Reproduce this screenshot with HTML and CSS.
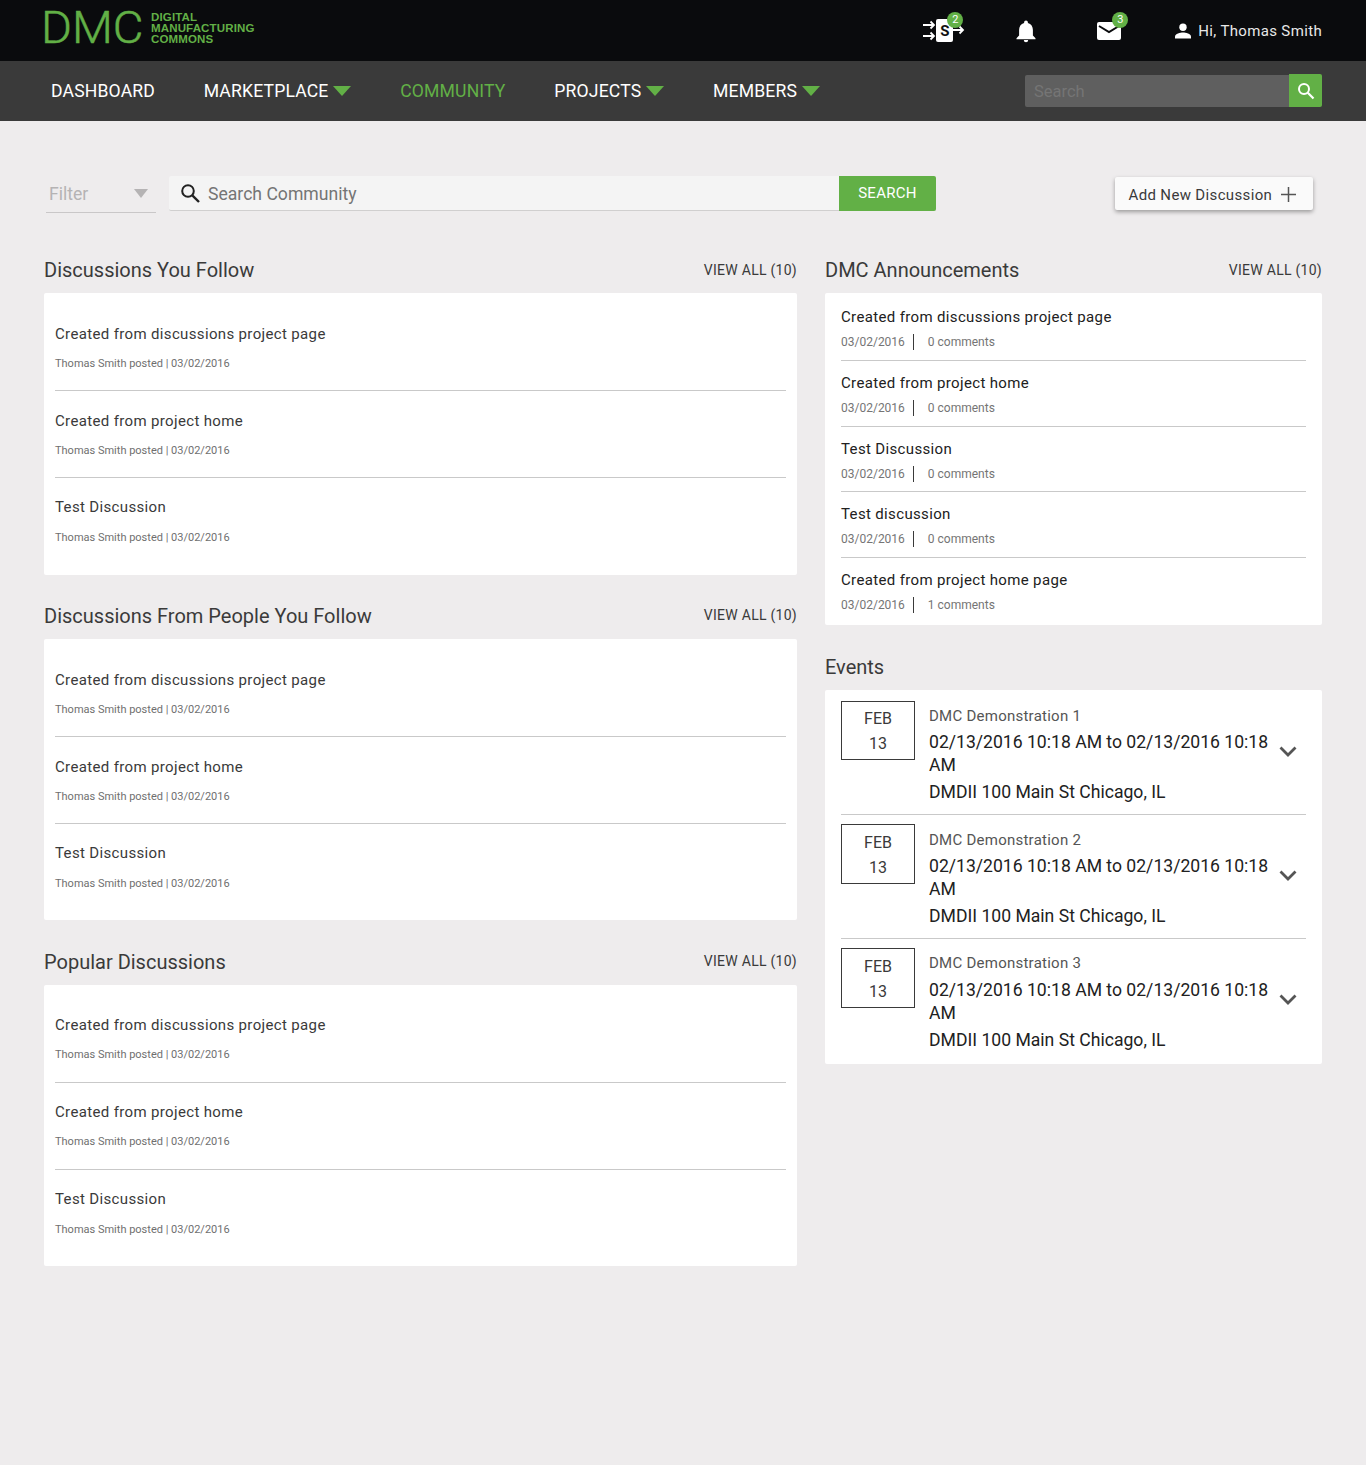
FILE: index.html
```html
<!DOCTYPE html>
<html lang="en">
<head>
<meta charset="utf-8">
<title>DMC Community</title>
<link rel="stylesheet" href="styles.css">
</head>
<body>
<header class="topbar">
  <a class="logo">
    <span class="logo-dmc">DMC</span>
    <span class="logo-sub">DIGITAL<br>MANUFACTURING<br>COMMONS</span>
  </a>
  <div class="top-actions">
    <span class="top-icon icon-swap">
      <svg width="42" height="30" viewBox="0 0 42 30"><path d="M0 11h10.500M7.500 7.500 11 11l-3.500 3.500M0 22h10.500M7.500 18.500 11 22l-3.500 3.500" fill="none" stroke="#fff" stroke-width="1.800"/><rect x="13" y="5" width="17" height="23" rx="2" fill="#fff"/><path d="M30 16h9.500M36.500 12.500 40 16l-3.500 3.500" fill="none" stroke="#fff" stroke-width="1.800"/></svg>
      <b class="s-letter">S</b>
      <span class="badge">2</span>
    </span>
    <span class="top-icon icon-bell">
      <svg width="22" height="24" viewBox="0 0 22 24"><path d="M11 1.500c1.100 0 1.900.8 1.900 1.900v.6c3.300.9 5 3.700 5 7v5.500l2.600 2.700v1H1.500v-1l2.600-2.700V11c0-3.300 1.700-6.100 5-7v-.6c0-1.100.8-1.900 1.900-1.900zM8.800 21h4.400a2.200 2.200 0 0 1-4.400 0z" fill="#fff"/></svg>
    </span>
    <span class="top-icon icon-mail">
      <svg width="26" height="20" viewBox="0 0 26 20"><path d="M3 1h20a2 2 0 0 1 2 2v14a2 2 0 0 1-2 2H3a2 2 0 0 1-2-2V3a2 2 0 0 1 2-2z" fill="#fff"/><path d="M3 5l10 6 10-6" fill="none" stroke="#0a0b0d" stroke-width="2"/></svg>
      <span class="badge">3</span>
    </span>
    <span class="user">
      <svg width="16" height="16" viewBox="0 0 16 16"><circle cx="8" cy="4.300" r="3.700" fill="#fff"/><path d="M0 15.500v-2c0-2.700 5.300-4 8-4s8 1.300 8 4v2z" fill="#fff"/></svg>
      <span>Hi, Thomas Smith</span>
    </span>
  </div>
</header>
<nav class="mainnav">
  <ul class="nav-list">
    <li class="nav-item">DASHBOARD</li>
    <li class="nav-item has-caret">MARKETPLACE<i class="caret"></i></li>
    <li class="nav-item active">COMMUNITY</li>
    <li class="nav-item has-caret">PROJECTS<i class="caret"></i></li>
    <li class="nav-item has-caret">MEMBERS<i class="caret"></i></li>
  </ul>
  <div class="nav-search">
    <span class="nav-search-input">Search</span>
    <span class="nav-search-btn">
      <svg width="18" height="18" viewBox="0 0 18 18"><circle cx="7" cy="7" r="5" fill="none" stroke="#fff" stroke-width="2"/><path d="M10.800 10.800 16.500 16.500" stroke="#fff" stroke-width="2.200"/></svg>
    </span>
  </div>
</nav>
<main class="page">
  <div class="toolbar">
    <div class="filter"><span>Filter</span><i class="filter-caret"></i></div>
    <div class="search">
      <svg class="search-icon" width="20" height="20" viewBox="0 0 20 20"><circle cx="8" cy="8" r="5.800" fill="none" stroke="#212121" stroke-width="2"/><path d="M12.300 12.300 19 19" stroke="#212121" stroke-width="2.400"/></svg>
      <span class="search-text">Search Community</span>
      <span class="search-btn">SEARCH</span>
    </div>
    <button class="add-btn">Add New Discussion
      <svg width="15" height="15" viewBox="0 0 15 15"><path d="M7.500 0v15M0 7.500h15" stroke="#555" stroke-width="1.500"/></svg>
    </button>
  </div>
  <div class="columns">
    <div class="col-left">
      <section class="block">
        <div class="block-head"><h2>Discussions You Follow</h2><a>VIEW ALL (10)</a></div>
        <div class="card disc-card">
          <article class="disc"><h3>Created from discussions project page</h3><p>Thomas Smith posted | 03/02/2016</p></article>
          <article class="disc"><h3>Created from project home</h3><p>Thomas Smith posted | 03/02/2016</p></article>
          <article class="disc"><h3>Test Discussion</h3><p>Thomas Smith posted | 03/02/2016</p></article>
        </div>
      </section>
      <section class="block">
        <div class="block-head"><h2>Discussions From People You Follow</h2><a>VIEW ALL (10)</a></div>
        <div class="card disc-card">
          <article class="disc"><h3>Created from discussions project page</h3><p>Thomas Smith posted | 03/02/2016</p></article>
          <article class="disc"><h3>Created from project home</h3><p>Thomas Smith posted | 03/02/2016</p></article>
          <article class="disc"><h3>Test Discussion</h3><p>Thomas Smith posted | 03/02/2016</p></article>
        </div>
      </section>
      <section class="block">
        <div class="block-head"><h2>Popular Discussions</h2><a>VIEW ALL (10)</a></div>
        <div class="card disc-card">
          <article class="disc"><h3>Created from discussions project page</h3><p>Thomas Smith posted | 03/02/2016</p></article>
          <article class="disc"><h3>Created from project home</h3><p>Thomas Smith posted | 03/02/2016</p></article>
          <article class="disc"><h3>Test Discussion</h3><p>Thomas Smith posted | 03/02/2016</p></article>
        </div>
      </section>
    </div>
    <div class="col-right">
      <section class="block">
        <div class="block-head"><h2>DMC Announcements</h2><a>VIEW ALL (10)</a></div>
        <div class="card ann-card">
          <article class="ann"><h3>Created from discussions project page</h3><p><span>03/02/2016</span><span>0 comments</span></p></article>
          <article class="ann"><h3>Created from project home</h3><p><span>03/02/2016</span><span>0 comments</span></p></article>
          <article class="ann"><h3>Test Discussion</h3><p><span>03/02/2016</span><span>0 comments</span></p></article>
          <article class="ann"><h3>Test discussion</h3><p><span>03/02/2016</span><span>0 comments</span></p></article>
          <article class="ann"><h3>Created from project home page</h3><p><span>03/02/2016</span><span>1 comments</span></p></article>
        </div>
      </section>
      <section class="block">
        <div class="block-head"><h2>Events</h2></div>
        <div class="card ev-card">
          <article class="ev">
            <div class="ev-date"><span>FEB</span><span>13</span></div>
            <div class="ev-body"><h4>DMC Demonstration 1</h4><p>02/13/2016 10:18 AM to 02/13/2016 10:18 AM</p><p class="ev-loc">DMDII 100 Main St Chicago, IL</p></div>
            <svg class="chev" width="18" height="11" viewBox="0 0 18 11"><path d="M1.500 1.500 9 9l7.500-7.500" fill="none" stroke="#555" stroke-width="2.800"/></svg>
          </article>
          <article class="ev">
            <div class="ev-date"><span>FEB</span><span>13</span></div>
            <div class="ev-body"><h4>DMC Demonstration 2</h4><p>02/13/2016 10:18 AM to 02/13/2016 10:18 AM</p><p class="ev-loc">DMDII 100 Main St Chicago, IL</p></div>
            <svg class="chev" width="18" height="11" viewBox="0 0 18 11"><path d="M1.500 1.500 9 9l7.500-7.500" fill="none" stroke="#555" stroke-width="2.800"/></svg>
          </article>
          <article class="ev">
            <div class="ev-date"><span>FEB</span><span>13</span></div>
            <div class="ev-body"><h4>DMC Demonstration 3</h4><p>02/13/2016 10:18 AM to 02/13/2016 10:18 AM</p><p class="ev-loc">DMDII 100 Main St Chicago, IL</p></div>
            <svg class="chev" width="18" height="11" viewBox="0 0 18 11"><path d="M1.500 1.500 9 9l7.500-7.500" fill="none" stroke="#555" stroke-width="2.800"/></svg>
          </article>
        </div>
      </section>
    </div>
  </div>
</main>
</body>
</html>
```
FILE: styles.css
```css
* { box-sizing: border-box; }
html, body { margin: 0; padding: 0; }
body {
  min-height: 1465px;
  background: #eeeced;
  color: #3a3a3a;
  font-family: Roboto, "Liberation Sans", sans-serif;
}
h2, h3, h4, p, ul { margin: 0; padding: 0; font-weight: 400; }
ul { list-style: none; }

.topbar {
  height: 61px;
  background: #0a0b0d;
  padding: 0 44px;
  display: flex;
  align-items: center;
  justify-content: space-between;
}
.logo { display: flex; align-items: center; color: #62b046; margin-top: -5px; }
.logo-dmc {
  font-family: Roboto, sans-serif;
  font-weight: 300;
  font-size: 45px;
  line-height: 36px;
  width: 107px;
  margin-left: -3px;
  margin-right: 3px;
  -webkit-text-stroke: .5px #62b046;
  transform: scaleX(1.05);
  transform-origin: left center;
}
.logo-sub {
  font-family: "Liberation Sans", sans-serif;
  font-weight: 700;
  font-size: 11.500px;
  line-height: 11px;
  letter-spacing: .15px;
  margin-top: 1px;
}
.top-actions { display: flex; align-items: center; color: #fff; }
.top-icon { position: relative; display: flex; }
.icon-swap { width: 42px; height: 30px; margin-right: 50px; margin-top: -3px; }
.s-letter {
  position: absolute;
  left: 13px;
  top: 8px;
  width: 17px;
  text-align: center;
  color: #111;
  font-size: 15px;
  line-height: 18px;
}
.icon-bell { width: 22px; margin-right: 59px; }
.icon-mail { width: 26px; margin-right: 53px; margin-top: 1px; }
.badge {
  position: absolute;
  width: 16px;
  height: 16px;
  border-radius: 50%;
  background: #62b046;
  color: #fff;
  font-size: 11px;
  line-height: 16px;
  text-align: center;
}
.icon-swap .badge { left: 24px; top: -2px; }
.icon-mail .badge { left: 16px; top: -9px; }
.user { display: flex; align-items: center; gap: 7px; font-size: 15px; letter-spacing: .35px; color: #e8e8e8; }

.mainnav {
  height: 60px;
  background: #3a3a3a;
  padding: 0 44px 0 51px;
  display: flex;
  align-items: center;
  justify-content: space-between;
}
.nav-list { display: flex; gap: 48.750px; }
.nav-item { font-size: 17.600px; line-height: 24px; color: #fff; display: flex; align-items: center; letter-spacing: .15px; }
.nav-item.active { color: #62b046; }
.caret {
  width: 0;
  height: 0;
  margin-left: 5px;
  border-left: 9.500px solid transparent;
  border-right: 9.500px solid transparent;
  border-top: 10px solid #62b046;
}
.nav-search { display: flex; align-items: flex-end; margin-top: -1px; }
.nav-search-input {
  width: 264px;
  height: 32px;
  padding-left: 9px;
  background: #5f5f5f;
  border-radius: 2px 0 0 2px;
  color: #757575;
  font-size: 16.500px;
  line-height: 33px;
}
.nav-search-btn {
  width: 33px;
  height: 33px;
  background: #62b046;
  border-radius: 0 2px 2px 0;
  display: flex;
  align-items: center;
  justify-content: center;
}

.page { padding: 55px 44px 0; }
.toolbar { display: flex; align-items: flex-start; height: 36px; }
.filter {
  width: 110px;
  margin-left: 2px;
  height: 37px;
  border-bottom: 1px solid #c9c7c8;
  display: flex;
  align-items: center;
  justify-content: space-between;
  padding: 0 8px 1px 3px;
  color: #b5b3b4;
  font-size: 17.600px;
}
.filter-caret {
  width: 0;
  height: 0;
  border-left: 7.500px solid transparent;
  border-right: 7.500px solid transparent;
  border-top: 9px solid #b5b3b4;
}
.search {
  width: 767px;
  margin-left: 13px;
  height: 35px;
  display: flex;
  align-items: center;
  background: #f4f4f4;
  border-bottom: 1px solid #d0cfcf;
  border-radius: 2px;
  position: relative;
}
.search-icon { margin-left: 11px; flex: none; }
.search-text { margin: 1px 0 0 8px; font-size: 17.600px; color: #757575; flex: 1; }
.search-btn {
  width: 97px;
  height: 35px;
  margin-bottom: -1px;
  background: #62b046;
  border-radius: 0 2px 2px 0;
  color: #fff;
  text-align: center;
  font-size: 15px;
  line-height: 35px;
  letter-spacing: .3px;
}
.add-btn {
  margin-left: auto;
  margin-right: 9px;
  margin-top: 1px;
  width: 198px;
  height: 33px;
  border: 0;
  border-radius: 2px;
  background: #fafafa;
  box-shadow: 0 2px 4px rgba(0,0,0,.35);
  display: flex;
  align-items: center;
  justify-content: space-between;
  padding: 2px 17px 0 13.500px;
  color: #3a3a3a;
  font-family: inherit;
  font-size: 15px;
  letter-spacing: .35px;
}

.columns { display: flex; justify-content: space-between; margin-top: 46px; }
.col-left { width: 753px; }
.col-right { width: 497px; }
.block-head {
  display: flex;
  justify-content: space-between;
  align-items: center;
  height: 35px;
  padding-bottom: 11px;
  margin-top: 29.350px;
}
.block:first-child .block-head { margin-top: 0; }
.block-head h2 { font-size: 20px; color: #3a3a3a; }
.block-head a { font-size: 14px; letter-spacing: .27px; color: #3a3a3a; margin-top: -1px; }
.card { background: #fff; border-radius: 2px; }

.disc-card { padding: 11px; height: 281.500px; }
.disc { height: 87px; padding-top: 19.700px; border-bottom: 1px solid #c9c9c9; }
.disc:last-child { border-bottom: 0; padding-top: 19.300px; }
.disc:last-child p { margin-top: 14px; }
.disc h3 { font-size: 15px; line-height: 20px; letter-spacing: .35px; color: #3a3a3a; }
.disc p { margin-top: 13px; font-size: 11px; line-height: 14px; color: #6f6f6f; }

.ann-card { padding: 2.300px 16px 0; height: 332px; }
.col-right .block + .block .block-head { margin-top: 29.500px; }
.ann { height: 65.670px; padding-top: 12px; border-bottom: 1px solid #c9c9c9; }
.ann:last-child { border-bottom: 0; }
.ann h3 { font-size: 15px; line-height: 20px; letter-spacing: .35px; color: #212121; }
.ann p { display: flex; margin-top: 7px; font-size: 12px; line-height: 16px; color: #757575; }
.ann p span:first-child { padding-right: 8px; margin-right: 14px; border-right: 1px solid #3a3a3a; }

.ev-card { padding: 0 16px; height: 374px; }
.ev { height: 124px; padding-top: 9px; display: flex; align-items: flex-start; border-bottom: 1px solid #c9c9c9; }
.ev:first-child { height: 125px; padding-top: 11px; }
.ev:last-child { border-bottom: 0; }
.ev-date {
  flex: none;
  width: 74px;
  height: 60px;
  border: 1px solid #3a3a3a;
  display: flex;
  flex-direction: column;
  align-items: center;
  padding-top: 5px;
  font-size: 16px;
  line-height: 25px;
  color: #3a3a3a;
}
.ev:first-child .ev-date { height: 59px; padding-top: 4px; }
.ev-body { width: 342px; margin-left: 14px; }
.ev-body h4 { font-size: 15px; font-weight: 400; line-height: 20px; letter-spacing: .25px; color: #555; margin-top: 6px; }
.ev:first-child h4, .ev:last-child h4 { margin-top: 5px; }
.ev-body p { font-size: 17.600px; line-height: 23px; color: #212121; margin-top: 5px; }
.ev:last-child h4 + p { margin-top: 6px; }
.ev-body .ev-loc { margin-top: 4px; }
.chev { flex: none; margin: 46.500px 0 0 8px; }
.ev:first-child .chev { margin-top: 45.500px; }
```
